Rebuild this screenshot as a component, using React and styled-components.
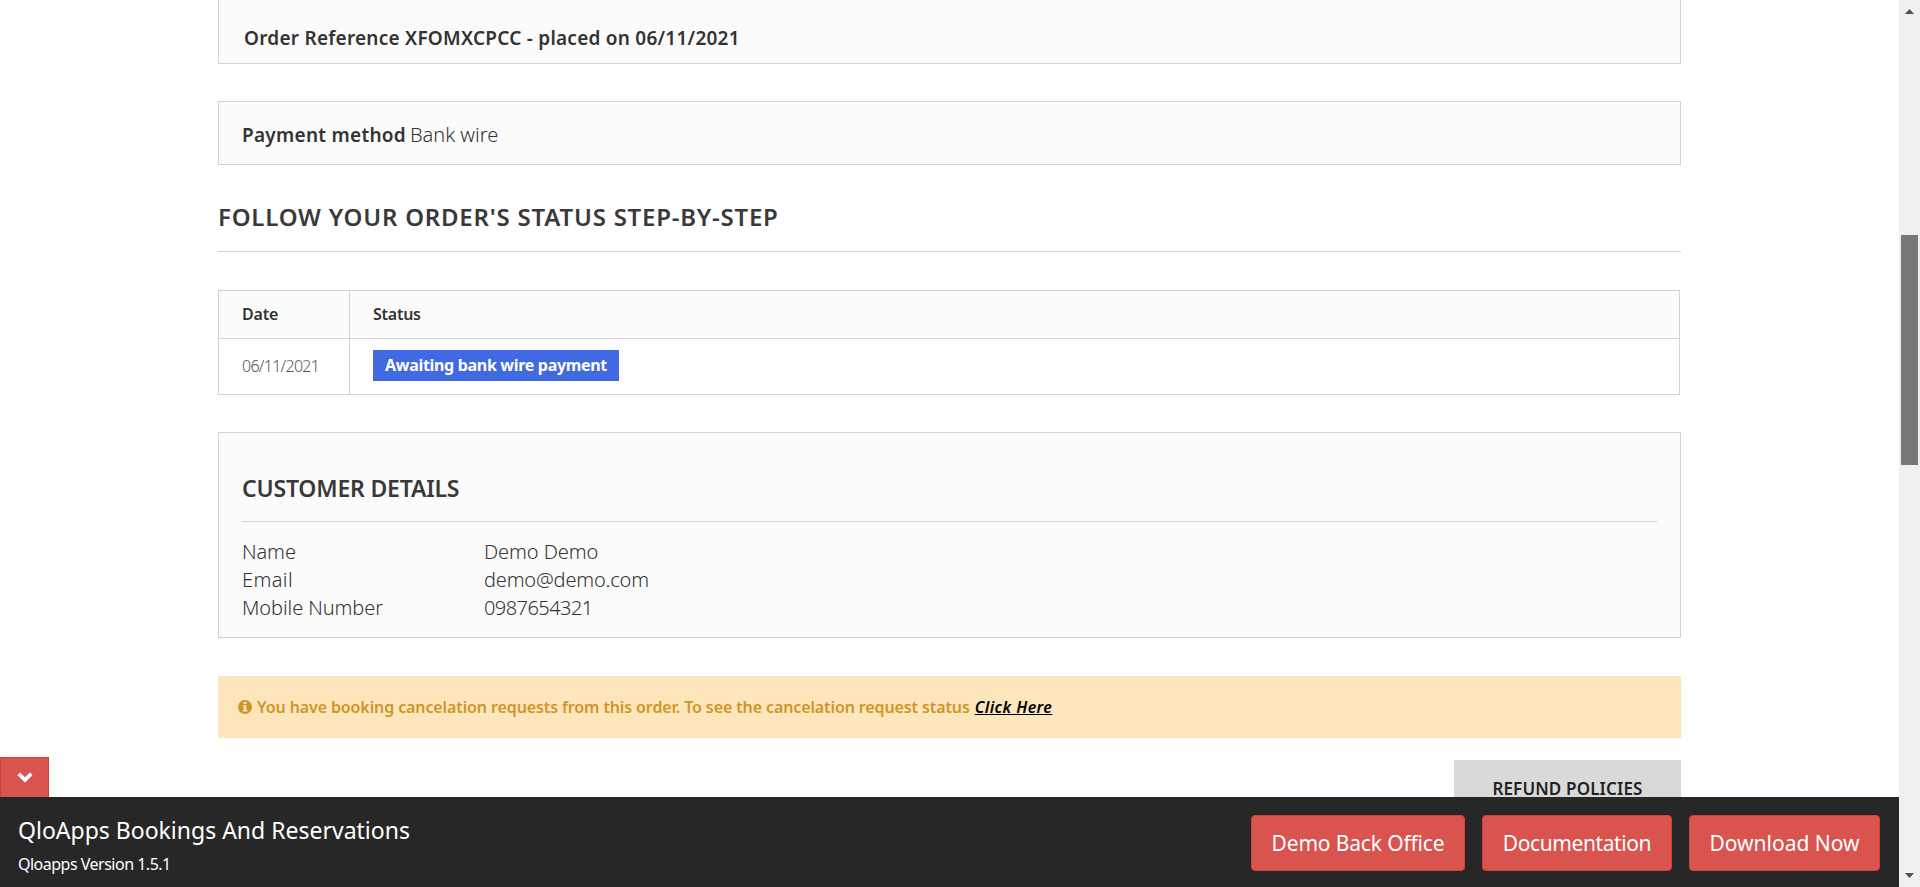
import React from "react";
import styled, { createGlobalStyle, css } from "styled-components";

const GlobalStyle = createGlobalStyle`
  *, *::before, *::after { box-sizing: border-box; }
  body {
    margin: 0;
    background: #fff;
    color: #333;
    font-family: "Noto Sans", "Open Sans", sans-serif;
    overflow: hidden;
  }
`;

const line = "1px solid #d3d3d3";

const Window = styled.div`
  display: flex;
  height: 887px;
  overflow: hidden;
`;

const Page = styled.div`
  flex: 1;
  min-width: 0;
  display: flex;
  flex-direction: column;
`;

const Main = styled.main`
  flex: 1;
  min-height: 0;
  overflow: hidden;
  padding: 0 218px;
`;

const Text = styled.span`
  white-space: nowrap;
  letter-spacing: ${(p) => p.$track || 0}px;
`;

const Panel = styled.section`
  background: #fbfbfb;
  border: ${line};
`;

const ReferencePanel = styled(Panel)`
  height: 64px;
  border-top: 0;
  padding: 25px 25px 0;
  font-size: 19px;
  line-height: 26px;
  font-weight: 600;
`;

const PaymentPanel = styled(Panel)`
  height: 64px;
  margin-top: 37px;
  padding: 20px 23px 0;
  font-size: 19px;
  line-height: 26px;
`;

const Label = styled(Text)`
  font-weight: 600;
`;

const Value = styled(Text)`
  margin-left: 4px;
  font-size: 20px;
  font-weight: 300;
`;

const SectionTitle = styled.h1`
  margin: 37px 0 0;
  height: 50px;
  border-bottom: ${line};
  font-size: 24px;
  line-height: 30px;
  font-weight: 560;
  color: #3a3939;
`;

const Table = styled.div`
  width: calc(100% - 1px);
  margin-top: 38px;
  border: ${line};
`;

const TableRow = styled.div`
  display: grid;
  grid-template-columns: 131px 1fr;
  height: ${(p) => (p.$head ? 48 : 55)}px;
  ${(p) =>
    p.$head &&
    css`
      background: #fbfbfb;
      border-bottom: ${line};
      font-weight: 600;
    `}
`;

const Cell = styled.div`
  display: flex;
  align-items: center;
  padding: 0 0 2px 23px;
  font-size: 16px;
  &:first-child {
    border-right: ${line};
  }
`;

const DateValue = styled(Text)`
  font-size: 16px;
  font-weight: 300;
  color: #555;
`;

const Badge = styled.span`
  height: 31px;
  padding: 0 12px;
  width: 246px;
  background: #4169e1;
  color: #fff;
  font-size: 16px;
  line-height: 30px;
  font-weight: 700;
`;

const CustomerPanel = styled(Panel)`
  height: 206px;
  margin-top: 37px;
  padding: 40px 23px 0;
`;

const PanelTitle = styled.h2`
  margin: 0 0 16px;
  height: 49px;
  border-bottom: ${line};
  font-size: 23px;
  line-height: 30px;
  font-weight: 560;
  color: #3a3939;
`;

const Details = styled.dl`
  display: grid;
  grid-template-columns: 242px 1fr;
  margin: 0;
  font-size: 20px;
  line-height: 28px;
  font-weight: 300;
  dd {
    margin: 0;
  }
`;

const Alert = styled.div`
  display: flex;
  align-items: center;
  height: 62px;
  margin-top: 38px;
  padding-left: 20px;
  background: #fde6bb;
  color: #cf9627;
  font-size: 16px;
  font-weight: 600;
`;

const InfoIcon = styled.svg`
  width: 14px;
  height: 14px;
  margin-right: 5px;
`;

const AlertLink = styled.a`
  margin-left: 5px;
  color: #000;
  font-style: italic;
  white-space: nowrap;
  letter-spacing: 0.4px;
  text-decoration: underline;
  text-decoration-thickness: 1px;
  text-underline-offset: 1px;
`;

const RefundButton = styled.button`
  display: block;
  width: 227px;
  height: 57px;
  margin: 22px 0 0 auto;
  padding: 0;
  border: 0;
  background: #d9d9d9;
  color: #222;
  font: 560 17px/57px "Noto Sans", sans-serif;
`;

const Footer = styled.footer`
  position: relative;
  display: flex;
  justify-content: space-between;
  height: 90px;
  padding: 18px 19px 0 18px;
  background: #272727;
  color: #fff;
`;

const Toggle = styled.button`
  position: absolute;
  left: 0;
  bottom: 100%;
  display: flex;
  align-items: center;
  justify-content: center;
  width: 49px;
  height: 40px;
  padding: 0 0 1px;
  border: 1px solid #d43f3a;
  border-bottom: 0;
  background: #d9534f;
`;

const Product = styled.div`
  display: flex;
  flex-direction: column;
`;

const ProductName = styled(Text)`
  font-size: 23px;
  line-height: 30px;
`;

const Version = styled(Text)`
  margin-top: 4px;
  font-size: 16px;
  line-height: 30px;
`;

const Actions = styled.div`
  display: flex;
  gap: 17px;
`;

const ActionButton = styled.button`
  width: ${(p) => p.$width}px;
  height: 56px;
  padding: 0;
  border: 1px solid #d43f3a;
  border-radius: 4px;
  background: #d9534f;
  color: #fff;
  font: 380 21px/28px "Noto Sans", sans-serif;
`;

const Scrollbar = styled.div`
  display: flex;
  flex-direction: column;
  align-items: center;
  width: 21px;
  padding: 9px 0;
  background: #f0f0f0;
`;

const Thumb = styled.div`
  width: 17px;
  height: 230px;
  margin: 221px 0 408px;
  background: #787878;
`;

const Arrow = styled.svg`
  display: block;
  width: 9px;
  height: 5px;
  fill: #505050;
`;

const customer = [
  ["Name", -0.1, "Demo Demo", -0.1],
  ["Email", 0.4, "demo@demo.com", -0.18],
  ["Mobile Number", -0.08, "0987654321", -0.55],
];

export default function App() {
  return (
    <Window>
      <GlobalStyle />
      <Page>
        <Main>
          <ReferencePanel>
            <Text $track={0.24}>Order Reference XFOMXCPCC - placed on 06/11/2021</Text>
          </ReferencePanel>
          <PaymentPanel>
            <Label $track={0.27}>Payment method</Label>
            <Value $track={0}>Bank wire</Value>
          </PaymentPanel>
          <SectionTitle>
            <Text $track={0.78}>FOLLOW YOUR ORDER'S STATUS STEP-BY-STEP</Text>
          </SectionTitle>
          <Table>
            <TableRow $head>
              <Cell><Text $track={-0.2}>Date</Text></Cell>
              <Cell><Text $track={-0.25}>Status</Text></Cell>
            </TableRow>
            <TableRow>
              <Cell><DateValue $track={-0.7}>06/11/2021</DateValue></Cell>
              <Cell>
                <Badge><Text $track={-0.31}>Awaiting bank wire payment</Text></Badge>
              </Cell>
            </TableRow>
          </Table>
          <CustomerPanel>
            <PanelTitle><Text $track={-0.2}>CUSTOMER DETAILS</Text></PanelTitle>
            <Details>
              {customer.map(([label, lt, value, vt]) => (
                <React.Fragment key={label}>
                  <dt><Text $track={lt}>{label}</Text></dt>
                  <dd><Text $track={vt}>{value}</Text></dd>
                </React.Fragment>
              ))}
            </Details>
          </CustomerPanel>
          <Alert>
            <InfoIcon viewBox="0 0 14 14">
              <circle cx="7" cy="7" r="7" fill="currentColor" />
              <path d="M5.6 2h2.8v2.1H5.6zM4.8 5.2h3.6v4.7h1v1.6H4.7V9.9h1V6.8h-.9z" fill="#fde6bb" />
            </InfoIcon>
            <Text $track={-0.11}>
              You have booking cancelation requests from this order. To see the cancelation request status
            </Text>
            <AlertLink>Click Here</AlertLink>
          </Alert>
          <RefundButton><Text $track={0.15}>REFUND POLICIES</Text></RefundButton>
        </Main>
        <Footer>
          <Toggle aria-label="Collapse">
            <svg width="16" height="11" viewBox="0 0 16 11">
              <path d="M1.8 1.8L8 7.8l6.2-6" fill="none" stroke="#fff" strokeWidth="3.8" />
            </svg>
          </Toggle>
          <Product>
            <ProductName>QloApps Bookings And Reservations</ProductName>
            <Version $track={-0.5}>Qloapps Version 1.5.1</Version>
          </Product>
          <Actions>
            <ActionButton $width={214}><Text $track={-0.15}>Demo Back Office</Text></ActionButton>
            <ActionButton $width={190}><Text $track={-0.4}>Documentation</Text></ActionButton>
            <ActionButton $width={191}><Text $track={0}>Download Now</Text></ActionButton>
          </Actions>
        </Footer>
      </Page>
      <Scrollbar>
        <Arrow viewBox="0 0 9 5"><path d="M0 5L4.5 0L9 5z" /></Arrow>
        <Thumb />
        <Arrow viewBox="0 0 9 5"><path d="M0 0L4.5 5L9 0z" /></Arrow>
      </Scrollbar>
    </Window>
  );
}
